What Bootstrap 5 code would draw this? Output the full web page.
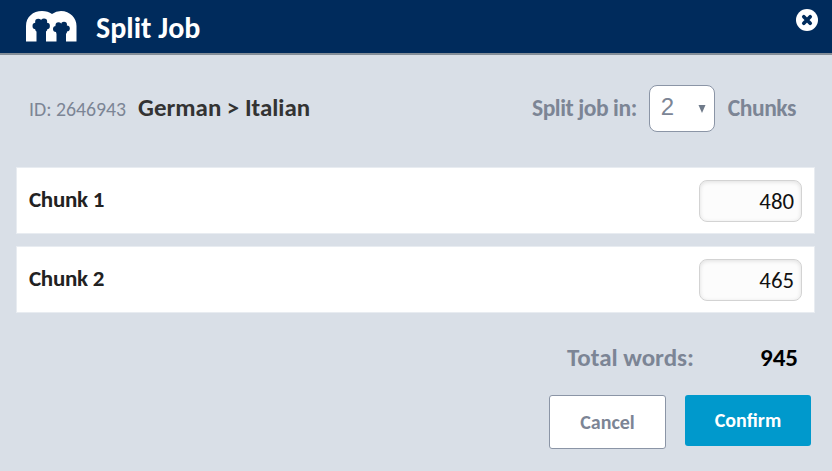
<!DOCTYPE html>
<html lang="en">
<head>
<meta charset="utf-8">
<meta name="viewport" content="width=device-width, initial-scale=1">
<title>Split Job</title>
<link href="https://cdn.jsdelivr.net/npm/bootstrap@5.3.0/dist/css/bootstrap.min.css" rel="stylesheet">
<style>
body{background:#d9dfe7;font-family:Calibri,Carlito,Lato,sans-serif;height:471px;overflow:hidden;line-height:1}
.top-bar{background:#002b5c;height:55px;border-bottom:2px solid #848e98;padding:0 14px 0 26px}
.top-title{font-size:30px;font-weight:700;color:#fff;margin:2px 0 0 19px;line-height:30px}
.close-x{margin-bottom:13px;line-height:0}
.job-line{height:112px;padding:0 36px 5px 29px;white-space:nowrap}
.soft{color:#7c8595}
.job-id{font-size:19.8px;margin:3px 12px 0 0}
.langs{font-size:24.9px;font-weight:700;color:#333}
.split-lbl{font-size:23.6px;font-weight:700;letter-spacing:-.45px}
.count-select{width:66px;height:47px;border:1px solid #8b95a6;border-radius:8px;background:#fff;color:#7c8595;font:24px/1 "Liberation Sans",sans-serif;padding:0 8px 3px 11px;margin:0 13px 0 12px}
.count-select svg{margin-top:4px}
.chunks{padding:0 17px 0 16px;gap:12px}
.chunk-row{height:67px;background:#fff;border:1px solid #e8ecf1;padding:0 12px}
.chunk-name{font-size:23px;font-weight:700;letter-spacing:-.3px;color:#222;margin-bottom:3px}
.words{width:103px;height:42px;border:1px solid #d3d3d3;border-radius:8px;background:#fcfcfc;box-shadow:inset 0 1px 4px rgba(0,0,0,.12);text-align:right;font-size:22.8px;color:#111;padding:1px 7px 0 0}
.total{height:24px;margin-top:32px;padding-right:34px;font-size:25px;font-weight:700}
.total-num{width:104px;text-align:right;color:#000}
.actions{margin-top:26px;padding-right:21px;gap:19px}
.btn-cancel,.btn-ok{font-size:20px;font-weight:700;border-radius:3px;line-height:1;padding:0}
.btn-cancel{width:117px;height:54px;background:#fff!important;border:1px solid #8b95a6!important;color:#7c8595!important}
.btn-ok{width:126px;height:51px;background:#09c!important;border:0;color:#fff!important;padding-bottom:1px}
</style>
<script src="https://cdn.jsdelivr.net/npm/bootstrap@5.3.0/dist/js/bootstrap.bundle.min.js"></script>
</head>
<body>
<header class="top-bar d-flex align-items-center">
  <svg width="51" height="32" viewBox="0 0 51 32" aria-hidden="true">
    <path fill="#fff" d="M0 30.5V15C0 6 7 0 16 0Q22 0 26 3Q30 0 35 0C44 0 50.5 7 50.5 15V30.5Z"/>
    <g fill="#002b5c"><path d="M10.5 14H20V32H10.5ZM30.5 17H40V32H30.5Z"/><circle cx="12.3" cy="11" r="3.2"/><circle cx="18" cy="10.8" r="3.2"/><circle cx="9.7" cy="15" r="3.2"/><circle cx="20.7" cy="15" r="3.2"/><circle cx="12" cy="18" r="2.8"/><circle cx="18.5" cy="18" r="2.8"/><circle cx="15" cy="15" r="4.8"/><circle cx="32.5" cy="14.2" r="3"/><circle cx="38" cy="13.8" r="3"/><circle cx="30" cy="18" r="3"/><circle cx="40.8" cy="17.5" r="3"/><circle cx="32.5" cy="20.5" r="2.5"/><circle cx="38.5" cy="20.5" r="2.5"/><circle cx="35.5" cy="18" r="4.5"/></g>
  </svg>
  <h1 class="top-title">Split Job</h1>
  <a class="close-x ms-auto" role="button" aria-label="Close"><svg width="22" height="22" viewBox="0 0 22 22"><circle cx="11" cy="11" r="11" fill="#fff"/><path d="M7.8 7.8L14.2 14.2M14.2 7.8L7.8 14.2" stroke="#002b5c" stroke-width="3.7" stroke-linecap="round"/></svg></a>
</header>
<main>
  <div class="job-line d-flex align-items-center">
    <span class="job-id soft">ID: 2646943</span>
    <span class="langs">German &gt; Italian</span>
    <span class="split-lbl soft ms-auto">Split job in:</span>
    <div class="count-select d-flex align-items-center justify-content-between" role="button"><span>2</span><svg width="8" height="8" viewBox="0 0 8 8"><path d="M.5 0H7.5L4 8Z" fill="#6f7a8a"/></svg></div>
    <span class="split-lbl soft">Chunks</span>
  </div>
  <div class="chunks d-flex flex-column">
    <div class="chunk-row d-flex align-items-center justify-content-between"><span class="chunk-name">Chunk 1</span><input class="words" value="480" aria-label="Chunk 1 words"></div>
    <div class="chunk-row d-flex align-items-center justify-content-between"><span class="chunk-name">Chunk 2</span><input class="words" value="465" aria-label="Chunk 2 words"></div>
  </div>
  <div class="total d-flex justify-content-end align-items-center"><span class="soft">Total words:</span><span class="total-num">945</span></div>
  <div class="actions d-flex justify-content-end align-items-start"><button class="btn btn-cancel">Cancel</button><button class="btn btn-ok">Confirm</button></div>
</main>
</body>
</html>
